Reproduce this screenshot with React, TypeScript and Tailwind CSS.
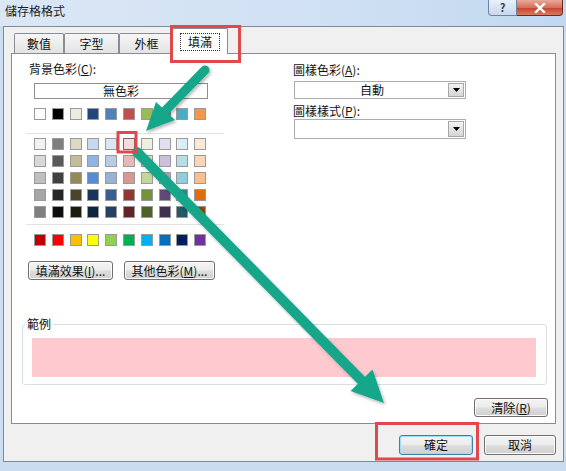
import React from "react";

const themeRow = [
  "bg-[#ffffff]",
  "bg-[#000000]",
  "bg-[#eeece1]",
  "bg-[#1f497d]",
  "bg-[#4f81bd]",
  "bg-[#c0504d]",
  "bg-[#9bbb59]",
  "bg-[#8064a2]",
  "bg-[#4bacc6]",
  "bg-[#f79646]",
];

const tintRows = [
  ["bg-[#f2f2f2]", "bg-[#7f7f7f]", "bg-[#ddd9c4]", "bg-[#c5d9f1]", "bg-[#dce6f1]", "bg-[#f2dcdb]", "bg-[#ebf1de]", "bg-[#e4dfec]", "bg-[#daeef3]", "bg-[#fde9d9]"],
  ["bg-[#d9d9d9]", "bg-[#595959]", "bg-[#c4bd97]", "bg-[#8db4e2]", "bg-[#b8cce4]", "bg-[#e6b8b7]", "bg-[#d8e4bc]", "bg-[#ccc0da]", "bg-[#b7dee8]", "bg-[#fcd5b4]"],
  ["bg-[#bfbfbf]", "bg-[#404040]", "bg-[#948a54]", "bg-[#538dd5]", "bg-[#95b3d7]", "bg-[#da9694]", "bg-[#c4d79b]", "bg-[#b1a0c7]", "bg-[#92cddc]", "bg-[#fabf8f]"],
  ["bg-[#a6a6a6]", "bg-[#262626]", "bg-[#494529]", "bg-[#16365c]", "bg-[#366092]", "bg-[#963634]", "bg-[#76933c]", "bg-[#60497a]", "bg-[#31869b]", "bg-[#e26b0a]"],
  ["bg-[#808080]", "bg-[#0d0d0d]", "bg-[#1d1b10]", "bg-[#0f243e]", "bg-[#244062]", "bg-[#632523]", "bg-[#4f6228]", "bg-[#403151]", "bg-[#215967]", "bg-[#974706]"],
];

const standardRow = [
  "bg-[#c00000]",
  "bg-[#ff0000]",
  "bg-[#ffc000]",
  "bg-[#ffff00]",
  "bg-[#92d050]",
  "bg-[#00b050]",
  "bg-[#00b0f0]",
  "bg-[#0070c0]",
  "bg-[#002060]",
  "bg-[#7030a0]",
];

function Swatches({ colors, selected }: { colors: string[]; selected?: number }) {
  return (
    <div className="ml-[8px] flex gap-[5.8px]">
      {colors.map((c, i) => (
        <div
          key={i}
          className={`h-[12px] w-[12px] border ${i === selected ? "border-[#6a6a6a]" : "border-[#9a9a9a]"} ${c}`}
        />
      ))}
    </div>
  );
}

function WinButton({
  children,
  className = "",
  isDefault = false,
}: {
  children: React.ReactNode;
  className?: string;
  isDefault?: boolean;
}) {
  return (
    <div
      className={`flex items-center justify-center rounded-[3px] border text-[12px] leading-[14px] text-[#111] bg-[linear-gradient(to_bottom,#f4f4f4_0%,#ececec_48%,#dedede_52%,#d0d0d0_100%)] ${
        isDefault
          ? "border-[#3c7fb1] shadow-[inset_0_0_0_1px_#9fdcf7]"
          : "border-[#707070] shadow-[inset_0_0_0_1px_#fbfbfb]"
      } ${className}`}
    >
      {children}
    </div>
  );
}

function Dropdown({ value, className = "" }: { value?: string; className?: string }) {
  return (
    <div className={`flex w-[172px] items-center border border-[#a9acb2] bg-white p-[1px] ${className}`}>
      <div className="flex-1 text-center text-[12px] leading-[14px]">{value}</div>
      <div className="flex h-full w-[16px] items-center justify-center border border-[#a7a7a7] bg-[linear-gradient(to_bottom,#f3f3f3,#d6d6d6)]">
        <svg width="7" height="4" viewBox="0 0 7 4">
          <polygon points="0,0 7,0 3.5,4" fill="#000" />
        </svg>
      </div>
    </div>
  );
}

function Tab({ label, active = false, width }: { label: string; active?: boolean; width: string }) {
  if (active) {
    return (
      <div
        className={`-mx-[2px] flex h-[26px] items-center justify-center rounded-t-[2px] border border-b-0 border-[#898c95] bg-white ${width}`}
      >
        <div className="border border-dotted border-[#333] px-[7px] py-[1px] text-[12px] leading-[14px]">{label}</div>
      </div>
    );
  }
  return (
    <div
      className={`mb-[1px] flex h-[20px] items-center justify-center rounded-t-[2px] border border-b-0 border-[#898c95] bg-[linear-gradient(to_bottom,#f6f6f6,#e3e3e3)] text-[12px] leading-[14px] ${width}`}
    >
      {label}
    </div>
  );
}

export default function App() {
  return (
    <div className="relative flex h-[471px] w-[566px] flex-col overflow-hidden bg-[#cadcf0] font-['Noto_Sans_CJK_TC','Liberation_Sans',sans-serif] text-[#111]">
      {/* 標題列 */}
      <div className="flex h-[26px] items-start bg-[linear-gradient(to_right,#dbe7f5,#cfe0f3_60%,#c2d8f0)]">
        <div className="pl-[5px] pt-[4px] text-[12px] leading-[14px] text-[#1c1c1c]">儲存格格式</div>
        <div className="ml-auto mr-[3px] flex">
          <div className="flex h-[16px] w-[29px] items-center justify-center rounded-bl-[4px] border border-t-0 border-[#6f84a0] bg-[linear-gradient(to_bottom,#e8f0f9,#c9d8ea)] text-[11px] font-bold leading-none text-[#2b3e5a]">
            ?
          </div>
          <div className="flex h-[16px] w-[46px] items-center justify-center rounded-br-[4px] border border-l-0 border-t-0 border-[#6b2a20] bg-[linear-gradient(to_bottom,#e9a999,#d5705b_50%,#c5422c_51%,#d97b5d)]">
            <svg width="12" height="10" viewBox="0 0 12 10">
              <path d="M2 1 L10 9 M10 1 L2 9" stroke="#fff" strokeWidth="2.4" strokeLinecap="square" />
            </svg>
          </div>
        </div>
      </div>

      {/* 對話框本體 */}
      <div className="ml-[3px] flex h-[436px] w-[561px] flex-col border border-[#7f8a98] bg-[#f0f0f0] px-[7px]">
        <div className="relative z-10 flex h-[27px] items-end pl-[3px]">
          <Tab label="數值" width="w-[50px]" />
          <Tab label="字型" width="w-[55px]" />
          <Tab label="外框" width="w-[55px]" />
          <Tab label="填滿" width="w-[56px]" active />
        </div>

        <div className="-mt-px flex h-[371px] w-[545px] flex-col border border-[#898c95] bg-white">
          <div className="flex h-[226px]">
            {/* 背景色彩 */}
            <div className="ml-[14px] w-[198px] pt-[8px]">
              <div className="ml-[3px] h-[14px] text-[12px] leading-[14px]">
                背景色彩(<span className="underline">C</span>):
              </div>
              <div className="ml-[8px] mt-[7px] flex h-[16px] w-[174px] items-center justify-center border border-[#8f8f8f] text-[12px] leading-[14px]">
                無色彩
              </div>
              <div className="mt-[9px]">
                <Swatches colors={themeRow} />
              </div>
              <div className="mt-[13px] h-px bg-[#e2e2e2]" />
              <div className="mt-[4px] flex flex-col gap-[5px]">
                {tintRows.map((row, i) => (
                  <Swatches key={i} colors={row} selected={i === 0 ? 5 : undefined} />
                ))}
              </div>
              <div className="mt-[6px] h-px bg-[#e2e2e2]" />
              <div className="mt-[9px]">
                <Swatches colors={standardRow} />
              </div>
              <div className="ml-[2px] mt-[15px] flex gap-[11px]">
                <WinButton className="h-[19px] w-[85px]">
                  填滿效果(<span className="underline">I</span>)...
                </WinButton>
                <WinButton className="h-[19px] w-[91px]">
                  其他色彩(<span className="underline">M</span>)...
                </WinButton>
              </div>
            </div>

            {/* 圖樣 */}
            <div className="ml-[69px] pt-[9px]">
              <div className="h-[14px] text-[12px] leading-[14px]">
                圖樣色彩(<span className="underline">A</span>):
              </div>
              <Dropdown value="自動" className="ml-[1px] mt-[4px] h-[18px]" />
              <div className="mt-[5px] h-[14px] text-[12px] leading-[14px]">
                圖樣樣式(<span className="underline">P</span>):
              </div>
              <Dropdown className="ml-[1px] mt-[1px] h-[20px]" />
            </div>
          </div>

          {/* 範例 */}
          <fieldset className="ml-[10px] mt-[37px] w-[525px] rounded-[3px] border border-[#d5dfe5] px-[9px] pb-[7px]">
            <legend className="ml-[-7px] px-[2px] text-[12px] leading-[14px]">範例</legend>
            <div className="mt-[7px] h-[39px] w-[504px] bg-[#ffc9d0]" />
          </fieldset>

          <div className="mr-[7px] mt-[13px] flex justify-end">
            <WinButton className="h-[19px] w-[74px]">
              清除(<span className="underline">R</span>)
            </WinButton>
          </div>
        </div>

        <div className="mt-[11px] flex justify-end gap-[11px]">
          <WinButton isDefault className="h-[20px] w-[74px]">
            確定
          </WinButton>
          <WinButton className="h-[20px] w-[72px]">取消</WinButton>
        </div>
      </div>

      {/* 標示用箭頭與框線 */}
      <svg
        className="pointer-events-none absolute left-0 top-0 z-20"
        width="566"
        height="471"
        viewBox="0 0 566 471"
      >
        <defs>
          <filter id="shadow" x="-20%" y="-20%" width="140%" height="140%">
            <feDropShadow dx="1.5" dy="2" stdDeviation="1.5" floodColor="#000" floodOpacity="0.28" />
          </filter>
        </defs>
        <g filter="url(#shadow)" fill="#19a68a">
          <line x1="205" y1="70" x2="163" y2="113" stroke="#19a68a" strokeWidth="9" strokeLinecap="round" />
          <polygon points="146,131 175,120 156,102" />
          <line x1="137" y1="152" x2="364" y2="383" stroke="#19a68a" strokeWidth="10" strokeLinecap="round" />
          <polygon points="384,403 372.5,369.5 350.5,391" />
        </g>
        <g fill="none" stroke="#e2474b" strokeWidth="3">
          <rect x="171.5" y="26.5" width="68" height="35" />
          <rect x="118" y="132.5" width="18" height="19.5" />
          <rect x="376.5" y="423.5" width="101" height="35.5" />
        </g>
      </svg>
    </div>
  );
}
